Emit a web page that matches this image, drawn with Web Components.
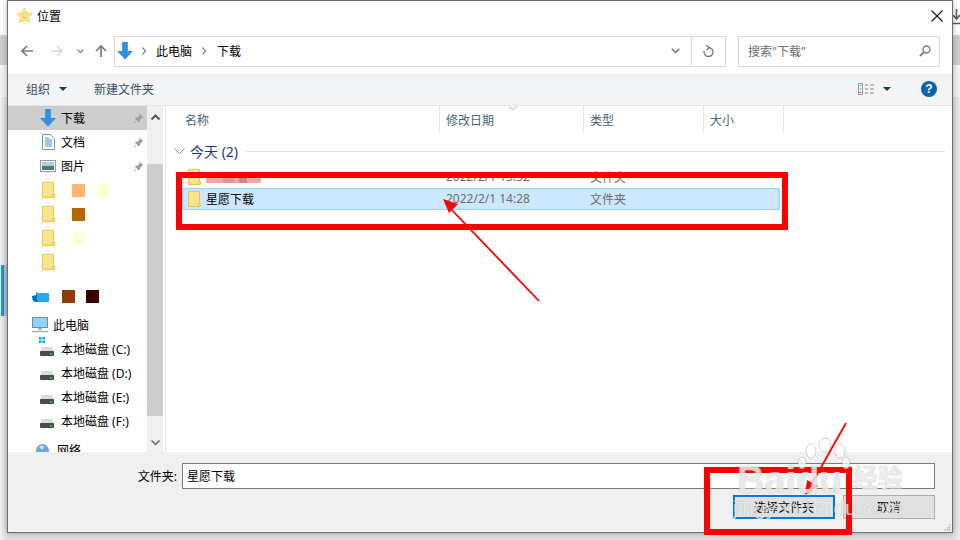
<!DOCTYPE html>
<html lang="zh"><head><meta charset="utf-8"><title>位置</title>
<style>
html,body{margin:0;height:540px;overflow:hidden}
body{position:relative;font:12px "Noto Sans","Noto Sans CJK SC",sans-serif;color:#000;
background:
 linear-gradient(#fff 0 0) 0 0/100% 35px no-repeat,
 linear-gradient(#cfcfcf 0 0) 0 35px/100% 30px no-repeat,
 linear-gradient(#f3f3f3 0 0) 0 65px/100% 32px no-repeat,
 linear-gradient(#2d8ccd 0 0) 1px 265px/3px 51px no-repeat,
 linear-gradient(#a5c3dc 0 0) 4px 265px/3px 51px no-repeat,
 linear-gradient(90deg,#f1f1f1,#dcdcdc 7px,#dcdcdc 953px,#ececec) 0 97px/100% 443px no-repeat}
</style></head><body>
<win-dialog>
  <title-bar>位置</title-bar>
  <nav-bar></nav-bar>
  <tool-bar></tool-bar>
  <main-pane>
    <side-nav slot="side"></side-nav>
    <file-list slot="list"></file-list>
  </main-pane>
  <foot-bar></foot-bar>
</win-dialog>
<mark-up></mark-up>
<script>
const I={
 star:'<svg width="17" height="17" viewBox="0 0 17 17"><path d="M8.5.8l2.4 5 5.5.7-4 3.8 1 5.5-4.900-2.700-4.900 2.700 1-5.500-4-3.800 5.500-.7z" fill="#fbe58f" stroke="#f4d77a" stroke-linejoin="round"/><path d="M6 7.500h1.300M10 7.500h1.200M6.500 10q2 1.500 4 0" stroke="#dcb650" fill="none"/></svg>',
 dl:'<svg width="16" height="18" viewBox="0 0 16 18"><path d="M5.200 0h5.600v9H16L8 17.500 0 9h5.200z" fill="#2f8fe0"/></svg>',
 pin:'<svg width="11" height="11" viewBox="0 0 11 11"><path d="M6.500.5l4 4-1.500.6-2 2-.3 2-1 .4-3.700-3.700.4-1 2-.3 2-2z" fill="#9aa2ab"/><path d="M3 8L.5 10.500" stroke="#9aa2ab"/></svg>',
 doc:'<svg width="13" height="16" viewBox="0 0 13 16"><path d="M.5.500h8l4 4v11H.500z" fill="#fff" stroke="#8a8f96"/><path d="M3 6h7M3 8h7M3 10h7M3 12h7" stroke="#3b93d8"/><path d="M3 4h4" stroke="#888"/></svg>',
 pic:'<svg width="16" height="12" viewBox="0 0 16 12"><rect x=".5" y=".5" width="15" height="11" fill="#fff" stroke="#999"/><rect x="2" y="2" width="12" height="4" fill="#a8cde8"/><rect x="2" y="6" width="12" height="4" fill="#4d7a6a"/></svg>',
 folder:'<svg width="13" height="16" viewBox="0 0 13 16"><path d="M.500.500h11v15H.500z" fill="#fee48f" stroke="#eac643"/><path d="M10.500 12.500v3h2v-3z" fill="#fee48f" stroke="#eac643"/></svg>',
 cloud:'<svg width="17" height="12" viewBox="0 0 17 12"><path d="M0 6l4-1 1-4 1 4h3v7H3Q0 11 0 6z" fill="#0a6fc4"/><rect x="5" y="3" width="12" height="9" rx="1" fill="#28a8ea"/></svg>',
 pc:'<svg width="16" height="16" viewBox="0 0 16 16"><rect x=".5" y=".5" width="15" height="10" fill="#8fd3f5" stroke="#6f8ea5"/><path d="M6 11h4v2H6z" fill="#a9b4bc"/><path d="M0 14.500h16" stroke="#a9b4bc" stroke-width="1.500"/></svg>',
 drive:'<svg style="margin-top:5px" width="14" height="9" viewBox="0 0 14 9"><path d="M2 0h10l2 4v5H0V4z" fill="#dcdcdc"/><rect y="4" width="14" height="5" rx="1" fill="#4b4b4b"/><rect x="10" y="6" width="2" height="1.500" fill="#3fdc5f"/></svg>',
 win:'<svg width="6" height="6" viewBox="0 0 7 7" fill="#17a3ee"><rect width="3" height="3"/><rect x="4" width="3" height="3"/><rect y="4" width="3" height="3"/><rect x="4" y="4" width="3" height="3"/></svg>',
 globe:'<svg width="13" height="13" viewBox="0 0 13 13"><circle cx="6.500" cy="6.500" r="6.500" fill="#6ea6d8"/><path d="M3 3q3-3 5 0-1 3-3 2z" fill="#cde3f5"/></svg>',
 chev:'<svg width="9" height="6" viewBox="0 0 9 6"><path d="M.5.500l4 4 4-4" fill="none" stroke="#666" stroke-width="1.500"/></svg>',
 up:'<svg width="9" height="6" viewBox="0 0 9 6"><path d="M.5 5.500l4-4 4 4" fill="none" stroke="#555" stroke-width="2"/></svg>',
 caret:'<svg width="8" height="4" viewBox="0 0 8 4"><path d="M0 0h8L4 4z" fill="#1e395b"/></svg>'
};
function def(name,css,html){
 customElements.define(name,class extends HTMLElement{
  constructor(){super();this.attachShadow({mode:'open'}).innerHTML='<style>'+css+'</style>'+(typeof html==='function'?html(this):html);}
 });
}
def('win-dialog',`:host{display:flex;flex-direction:column;box-sizing:border-box;margin-left:7px;width:946px;height:533px;background:#fff;border:1px solid #6e6e6e;box-shadow:0 0 6px rgba(0,0,0,.3)}`,'<slot></slot>');
def('title-bar',`:host{display:flex;align-items:center;height:35px;flex:none;padding:0 8px 6px 8px;box-sizing:border-box}
 svg{flex:none}.t{margin-left:4px;flex:1}.x{width:14px;height:14px;margin-right:0}`,
 I.star+'<span class="t"><slot></slot></span><svg class="x" viewBox="0 0 14 14"><path d="M1.500 1.500l11 11M12.500 1.500l-11 11" stroke="#111" fill="none" stroke-width="1.100"/></svg>');
def('nav-bar',`:host{display:flex;align-items:center;height:38px;flex:none;padding:0 0 8px 13px;box-sizing:border-box}
 .ic{flex:none}.addr{display:flex;align-items:center;box-sizing:border-box;width:612px;height:31px;border:1px solid #d9d9d9;margin-left:7px;flex:none}
 .addr span{margin-left:0}.sep{margin:0 8px 0 8px;display:block}.end{margin-left:auto;display:flex;align-items:center;height:100%}
 .cell{display:flex;align-items:center;justify-content:center;height:100%}
 .search{box-sizing:border-box;width:202px;height:31px;border:1px solid #d9d9d9;margin-left:12px;display:flex;align-items:center;justify-content:space-between;padding:0 8px 0 9px;color:#6d6d6d;flex:none}`,
 `<svg class="ic" width="12" height="12" viewBox="0 0 12 12"><path d="M6 1L1 6l5 5M1 6h11" fill="none" stroke="#7b7b7b" stroke-width="1.700"/></svg>
 <svg class="ic" style="margin-left:18px" width="12" height="12" viewBox="0 0 12 12"><path d="M6 1l5 5-5 5M11 6H0" fill="none" stroke="#d9d9d9" stroke-width="1.700"/></svg>
 <svg class="ic" style="margin-left:14px" width="7" height="5" viewBox="0 0 7 5"><path d="M.5.500l3 3 3-3" fill="none" stroke="#8a8a8a" stroke-width="1.300"/></svg>
 <svg class="ic" style="margin-left:11px" width="12" height="12" viewBox="0 0 12 12"><path d="M1 6l5-5 5 5M6 1v11" fill="none" stroke="#7b7b7b" stroke-width="1.700"/></svg>
 <div class="addr"><span style="display:flex;margin-left:2px">${I.dl}</span>
 <svg class="sep" style="margin:0 9px 0 9px" width="5" height="8" viewBox="0 0 5 8"><path d="M.5.500l3 3.500-3 3.500" fill="none" stroke="#8a8a8a" stroke-width="1.300"/></svg><span>此电脑</span>
 <svg class="sep" style="margin:0 10px 0 10px" width="5" height="8" viewBox="0 0 5 8"><path d="M.5.500l3 3.500-3 3.500" fill="none" stroke="#8a8a8a" stroke-width="1.300"/></svg><span>下载</span>
 <div class="end"><div class="cell" style="width:26px;padding-right:6px;box-sizing:border-box"><svg width="9" height="6" viewBox="0 0 9 6"><path d="M.7.700l3.800 3.800L8.300.700" fill="none" stroke="#777" stroke-width="1.500"/></svg></div>
 <div class="cell" style="width:33px;border-left:1px solid #d9d9d9"><svg width="11" height="12" viewBox="0 0 11 12"><path d="M5.500 2.500a4.500 4.500 0 1 1-4.300 3.200M3 0l3 2.500L3.500 5" fill="none" stroke="#777" stroke-width="1.300"/></svg></div></div></div>
 <div class="search"><span>搜索"下载"</span><svg width="12" height="12" viewBox="0 0 12 12"><circle cx="7.500" cy="4.500" r="3.500" fill="none" stroke="#7f7f7f" stroke-width="1.400"/><path d="M5 7L1 11" stroke="#7f7f7f" stroke-width="2"/></svg></div>`);
def('tool-bar',`:host{display:flex;align-items:center;height:31px;flex:none;background:#f3f4f6;padding:0 0 2px 18px;color:#3b4c63;box-sizing:border-box}
 .c{display:flex;margin-right:27px;margin-left:9px}.r{margin-left:auto;display:flex;align-items:center}
 .help{width:16px;height:16px;border-radius:50%;background:#0a64b4;color:#fff;font:bold 12px/16px "Liberation Sans",sans-serif;text-align:center;margin:0 15px 0 30px}`,
 `<span>组织</span><span class="c">${I.caret}</span><span>新建文件夹</span>
 <div class="r"><svg width="17" height="12" viewBox="0 0 17 12"><rect x=".5" y=".5" width="4" height="11" fill="#fff" stroke="#999"/><path d="M7 2h3M12 2h4M7 6h3M12 6h4M7 10h3M12 10h4" stroke="#8a8a8a"/><path d="M1.500 2.500h2M1.500 6h2" stroke="#3b93d8"/><path d="M1.500 9.500h2" stroke="#d33"/></svg>
 <span style="display:flex;margin-left:8px">${I.caret}</span><span class="help">?</span></div>`);
def('main-pane',`:host{display:flex;height:347px;flex:none;border-top:1px solid #e6e6e6;box-sizing:border-box;overflow:hidden}`,
 '<slot name="side"></slot><slot name="list"></slot>');
def('nav-row',`:host{display:flex;align-items:center;height:24px;flex:none;box-sizing:border-box;padding-right:3px;padding-left:var(--in,32px)}
 :host([sel]){background:#cdcdcd}.i{display:flex;width:21px;flex:none;align-items:center;position:relative}
 .p{margin-left:auto;display:flex}`,
 h=>{const pin=h.hasAttribute('pin');return `<span class="i"><slot name="icon"></slot></span><slot></slot>${pin?'<span class="p">'+I.pin+'</span>':''}`});
def('blur-row',`:host{display:flex;align-items:center;height:24px;flex:none;box-sizing:border-box;padding-left:34px}
 .i{display:flex;width:30px;flex:none}::slotted(i){display:block;width:13px;height:13px;margin-right:11px}`,
 h=>`<span class="i"><slot name="icon"></slot></span><slot></slot>`);
function nr(t,ic,a=''){return `<nav-row ${a}><span slot="icon" style="display:flex">${ic}</span>${t}</nav-row>`}
function br(ic,cols){return `<blur-row><span slot="icon" style="display:flex">${ic}</span>${cols.map(c=>`<i style="background:${c}"></i>`).join('')}</blur-row>`}
def('side-nav',`:host{display:flex;width:158px;flex:none;box-sizing:border-box;border-right:1px solid #e6e6e6;height:346px}
 .rows{display:flex;flex-direction:column;width:139px;overflow:hidden;flex:none}
 .bar{display:flex;flex-direction:column;width:16px;background:#f0f0f0;flex:none;align-items:center}
 .thumb{width:16px;height:252px;background:#cdcdcd;margin-top:37px}.btn{height:21px;display:flex;align-items:center;justify-content:center;flex:none;padding-top:0}
 .gap10{height:10px;flex:none}.gap5{height:5px;flex:none}`,
 ()=>`<div class="rows" style="--in:32px">
 ${nr('下载',I.dl,'sel pin')}
 ${nr('文档',`<span style="margin-left:2px;display:flex">${I.doc}</span>`,'pin')}
 ${nr('图片',I.pic,'pin')}
 ${br(I.folder,['#ffb56b','#ffffd6'])}${br(I.folder,['#b86600'])}${br(I.folder,['#ffffd8'])}${br(I.folder,[])}
 <div class="gap10"></div>
 <blur-row style="padding-left:24px"><span slot="icon" style="display:flex;margin-right:10px">${I.cloud}</span><i style="background:#8f3c00"></i><i style="background:#3a0000"></i></blur-row>
 <div class="gap5"></div>
 <nav-row style="--in:24px"><span slot="icon" style="display:flex">${I.pc}</span>此电脑</nav-row>
 <nav-row><span slot="icon" style="display:flex;position:relative"><span style="position:absolute;left:-1px;top:-5px;display:flex">${I.win}</span>${I.drive}</span>本地磁盘 (C:)</nav-row>
 ${nr('本地磁盘 (D:)',I.drive)}${nr('本地磁盘 (E:)',I.drive)}${nr('本地磁盘 (F:)',I.drive)}
 <div class="gap5"></div>
 <nav-row style="--in:28px"><span slot="icon" style="display:flex;width:17px">${I.globe}</span>网络</nav-row>
 </div><div class="bar"><div class="btn">${I.up}</div><div class="thumb"></div><div class="btn" style="margin-top:auto;height:18px">${I.chev}</div></div>`);
def('file-row',`:host{display:grid;grid-template-columns:18px 240px 144px 1fr;align-items:center;box-sizing:border-box;width:598px;height:22px;margin-left:16px;flex:none;color:#6d6d6d;border:1px solid transparent;padding:0 0 1px 5px}
 :host([sel]){background:#cce8ff;border-color:#99d1ff}
 .n{color:#000}.ic{display:flex}`,
 h=>`<span class="ic">${I.folder}</span><span class="n"><slot></slot></span><span>${h.getAttribute('d')}</span><span>文件夹</span>`);
def('file-list',`:host{display:flex;flex-direction:column;flex:1;min-width:0}
 .hd{display:grid;grid-template-columns:274px 144px 120px 80px;height:26px;flex:none;color:#4c607a;position:relative}
 .hd div{border-right:1px solid #e5e5e5;padding:2px 0 0 6px;display:flex;align-items:center;box-sizing:border-box}
 .hd div:first-child{padding-left:19px}
 .sort{position:absolute;left:342px;top:0}
 .grp{display:flex;align-items:center;height:24px;margin-top:8px;flex:none;padding:0 7px 2px 8px;color:#1e3287;font-size:14px;box-sizing:border-box}
 .grp i{flex:1;height:1px;background:#e2e2e2;margin-left:7px}.grp svg{margin-right:5px}
 .sp{height:2px;flex:none}`,
 `<div class="hd"><div>名称</div><div>修改日期</div><div>类型</div><div>大小</div>
 <svg class="sort" width="9" height="5" viewBox="0 0 9 5"><path d="M.5.500l4 3 4-3" fill="none" stroke="#aaa"/></svg></div>
 <div class="grp"><svg width="11" height="6" viewBox="0 0 11 6"><path d="M.5.500l5 5 5-5" fill="none" stroke="#8a8a8a"/></svg><span>今天 (2)</span><i></i></div>
 <div class="sp"></div>
 <file-row d="2022/2/1 15:32"><span style="display:inline-block;width:55px;height:10px;vertical-align:middle;background:linear-gradient(90deg,#e3abab 0 30%,#d49a9a 30% 50%,#d8aaaa 50% 60%,#c98888 60% 75%,#e3abab 75%)"></span></file-row>
 <file-row sel d="2022/2/1 14:28">星愿下载</file-row>`);
def('foot-bar',`:host{display:flex;flex-direction:column;flex:1;background:#f0f0f0;padding:11px 17px 0 0;box-sizing:border-box;position:relative}
 .r{display:flex;align-items:center;justify-content:flex-end}
 .in{box-sizing:border-box;width:753px;height:26px;border:1px solid #7a7a7a;background:#fff;padding:0 0 1px 4px;display:flex;align-items:center;margin-left:5px}
 .b{box-sizing:border-box;height:24px;display:flex;align-items:center;justify-content:center;background:#e1e1e1}
 .ok{width:102px;border:2px solid #0078d7}.no{width:92px;border:1px solid #adadad;margin-left:8px}
 .grip{position:absolute;right:1px;bottom:1px}`,
 `<div class="r"><span>文件夹:</span><div class="in">星愿下载</div></div>
 <div class="r" style="margin-top:6px"><div class="b ok">选择文件夹</div><div class="b no">取消</div></div>
 <svg class="grip" width="7" height="7" viewBox="0 0 7 7" fill="#b5b5b5"><rect x="5" y="5" width="1.500" height="1.500"/><rect x="3" y="5" width="1.500" height="1.500"/><rect x=".5" y="5" width="1.500" height="1.500"/><rect x="5" y="3" width="1.500" height="1.500"/><rect x="3" y="3" width="1.500" height="1.500"/><rect x="5" y=".5" width="1.500" height="1.500"/></svg>`);
def('mark-up',`:host{position:absolute;inset:0;display:block;pointer-events:none}
 .box{position:absolute;box-sizing:border-box;border:6px solid #f00}
 svg.a{position:absolute;left:0;top:0}
 .w{position:absolute;color:rgba(255,255,255,.72);text-shadow:0 0 1px rgba(120,120,120,.55);font-family:"Liberation Sans","Noto Sans CJK SC",sans-serif;white-space:nowrap;line-height:1}
 .dl{position:absolute;left:953px;top:9px}`,
 `<svg class="dl" width="7" height="16" viewBox="0 0 7 16"><path d="M3.500 0v10M0 6l3.500 4L7 6M0 14.500h7" fill="none" stroke="#555" stroke-width="1.500"/></svg>
 <div class="box" style="left:176px;top:172px;width:612px;height:58px"></div>
 <div class="box" style="left:704px;top:467px;width:148px;height:68px"></div>
 <svg class="a" width="960" height="540" viewBox="0 0 960 540">
  <path d="M539 301L449 207" stroke="#f00" stroke-width="1.800"/><path d="M443 199l15 5-9 9z" fill="#f00"/>
  <path d="M846 423L811 485" stroke="#f00" stroke-width="1.800"/><path d="M805 495l2-15 11 6z" fill="#f00"/>
  <g fill="rgba(255,255,255,.72)" stroke="rgba(130,130,130,.35)"><ellipse cx="811" cy="451" rx="5" ry="7"/><ellipse cx="825" cy="445" rx="6" ry="7"/><ellipse cx="840" cy="451" rx="5" ry="7"/><ellipse cx="802" cy="463" rx="4" ry="6"/><ellipse cx="846" cy="463" rx="4" ry="6"/></g>
 </svg>
 <span class="w" style="left:737px;top:461px;font-size:38px;font-weight:bold">Baidu</span>
 <span class="w" style="left:853px;top:466px;font-size:25px;font-weight:bold">经验</span>
 <span class="w" style="left:733px;top:497px;font-size:21px">jingyan.baidu.com</span>`);
</script>
</body></html>
